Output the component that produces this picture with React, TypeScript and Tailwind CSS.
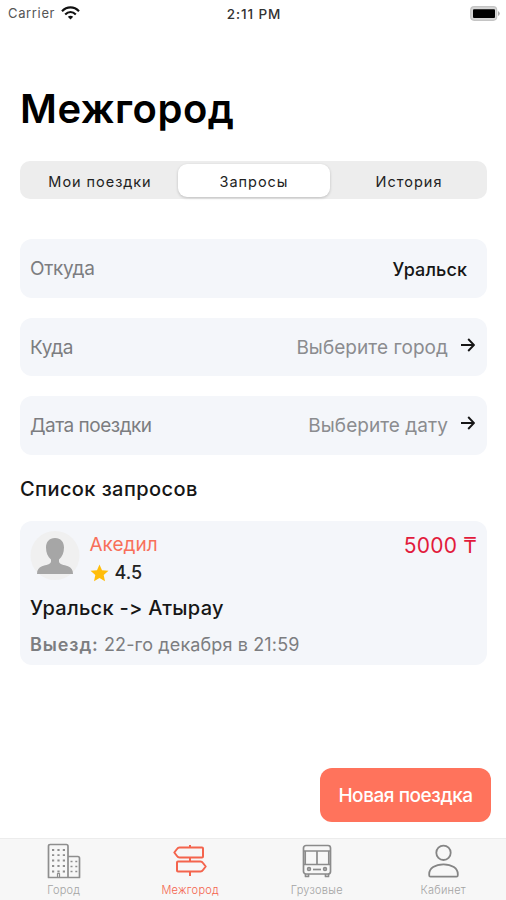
import type { ReactNode } from "react";

const cityIcon = (
  <svg width="34" height="36" viewBox="0 0 34 36" fill="none" stroke="#8e8e8e" strokeWidth="1.7" strokeLinejoin="round">
    <path d="M1.5 34.5V3.2Q1.5 1.5 3.2 1.5H19.3Q21 1.5 21 3.2V34.5Z M21 13.5H30.8Q32.5 13.5 32.5 15.2V34.5H21" />
    <path d="M5 7H18.5M5 12.2H18.5M5 17.5H18.5M5 23H18.5M5 28.5H18.5" strokeWidth="1.8" strokeDasharray="2.2 3.2" />
    <path d="M23.5 18.5H30.5M23.5 23.5H30.5M23.5 28.5H30.5" strokeWidth="1.6" strokeDasharray="2 2.8" />
    <path d="M10.5 34V30.5H12.5V34" strokeWidth="1.2" />
  </svg>
);

const signIcon = (
  <svg width="36" height="34" viewBox="0 0 36 34" fill="none" stroke="#f4644d" strokeWidth="2" strokeLinejoin="round">
    <path d="M18 1V3.5M18 13.5V17.5M18 27.5V32" />
    <path d="M7.5 3.5H30Q31 3.5 31 4.5V12.5Q31 13.5 30 13.5H7.5Q6 13.5 5 12L2.3 8.5L5 5Q6 3.5 7.5 3.5Z" />
    <path d="M28.5 17.5H6Q5 17.5 5 18.5V26.5Q5 27.5 6 27.5H28.5Q30 27.5 31 26L33.7 22.5L31 19Q30 17.5 28.5 17.5Z" />
  </svg>
);

const busIcon = (
  <svg width="30" height="34" viewBox="0 0 30 34" fill="none" stroke="#8b8b8b" strokeWidth="1.7" strokeLinejoin="round">
    <rect x="1.5" y="1.5" width="27" height="28.5" rx="2.5" />
    <path d="M2 7H28M2 20.5H28M15 7V20.5M3.2 7V20.5M26.8 7V20.5" />
    <circle cx="7" cy="25" r="1.4" />
    <circle cx="23" cy="25" r="1.4" />
    <path d="M11 25.5H19" />
    <path d="M3.5 30V32.5H6.5V30M23.5 30V32.5H26.5V30" />
  </svg>
);

const userIcon = (
  <svg width="31" height="34" viewBox="0 0 31 34" fill="none" stroke="#858585" strokeWidth="1.8" strokeLinejoin="round">
    <circle cx="15.5" cy="8.8" r="7.2" />
    <path d="M2.5 32.7Q1.2 32.7 1.2 31.3V30C1.2 24.5 7 20.3 15.5 20.3S29.8 24.5 29.8 30V31.3Q29.8 32.7 28.5 32.7Z" />
  </svg>
);

function Arrow() {
  return (
    <svg className="mb-[6px] ml-[13px]" width="14" height="14" viewBox="0 0 14 14" fill="none" stroke="#161616" strokeWidth="1.9">
      <path d="M0 7H13M7.2 1L13 7L7.2 13" />
    </svg>
  );
}

function Field({ label, spacing, children }: { label: string; spacing: string; children: ReactNode }) {
  return (
    <div className="flex h-[58.5px] items-center justify-between rounded-xl bg-[#f4f6fa] pt-[2px] pr-3 pl-[10px] text-[19px] text-[#7c7d80]">
      <span className={spacing}>{label}</span>
      <div className="flex items-center">{children}</div>
    </div>
  );
}

function Tab({ icon, label, active }: { icon: ReactNode; label: string; active?: boolean }) {
  return (
    <div className={`flex flex-1 flex-col items-center pt-[4px] pl-px text-[11px] leading-4 ${active ? "text-[#f4644d]" : "text-[#a3a3a3]"}`}>
      <div className="flex h-9 items-center">{icon}</div>
      <span className="mt-[3px] font-light tracking-[0.25px]">{label}</span>
    </div>
  );
}

export default function App() {
  return (
    <div className="flex h-[900px] w-[506px] flex-col overflow-hidden bg-white font-['Inter',sans-serif] text-black">
      <header className="grid h-7 grid-cols-3 items-center pr-[6px] pl-2 text-[13px]">
        <div className="flex items-center gap-[6px] text-[#555]">
          <span className="tracking-[0.65px]">Carrier</span>
          <svg className="-mt-[3px]" width="19" height="14" viewBox="0 0 19 14" fill="none" stroke="#111" strokeWidth="2.2">
            <path d="M1 5.2C6 .2 13 .2 18 5.2M4.2 8.5C7.4 5.4 11.6 5.4 14.8 8.5" />
            <path d="M9.5 13.5L6.8 10.8Q9.5 8.7 12.2 10.8Z" fill="#111" stroke="none" />
          </svg>
        </div>
        <span className="text-center text-[13.5px] font-medium tracking-[0.9px] text-[#333]">2:11 PM</span>
        <svg className="-mt-[2px] justify-self-end" width="30" height="15" viewBox="0 0 30 15">
          <rect x="0.7" y="0.7" width="26" height="13.6" rx="3.5" fill="#d6d6d6" stroke="#c4c4c4" strokeWidth="1.2" />
          <rect x="3" y="3.2" width="22" height="8.8" rx="1" fill="#000" />
          <path d="M28 5V10Q29.8 9 29.8 7.5T28 5Z" fill="#aaa" />
        </svg>
      </header>

      <main className="flex flex-1 flex-col pr-[19px] pl-5">
        <h1 className="mt-[57px] text-[40px] leading-[48px] font-semibold tracking-[0.5px]">Межгород</h1>

        <div className="mt-[28px] grid h-[38px] grid-cols-[155px_152px_1fr] items-center rounded-[10px] bg-[#ededed] p-[3px] text-center text-[14.5px] text-[#222]">
          <span className="pt-[2px] pr-px tracking-[0.95px]">Мои поездки</span>
          <span className="flex h-[33px] items-center justify-center rounded-[9px] bg-white pt-[2px] tracking-[0.95px] shadow-[0_1px_3px_rgba(0,0,0,0.2)]">Запросы</span>
          <span className="pt-[2px] pl-[4px] tracking-[1px]">История</span>
        </div>

        <div className="mt-10 flex flex-col gap-5">
          <Field label="Откуда" spacing="tracking-[-0.3px]">
            <span className="pr-2 text-[18px] font-medium tracking-[0.1px] text-[#161616]">Уральск</span>
          </Field>
          <Field label="Куда" spacing="tracking-[-0.3px]">
            <span className="tracking-[0.05px] text-[#8b8c8f]">Выберите город</span>
            <Arrow />
          </Field>
          <Field label="Дата поездки" spacing="tracking-[-0.5px]">
            <span className="tracking-[0.05px] text-[#8b8c8f]">Выберите дату</span>
            <Arrow />
          </Field>
        </div>

        <h2 className="mt-5 text-[20px] leading-7 font-medium tracking-[0.42px] text-[#161616]">Список запросов</h2>

        <article className="mt-[18px] h-[144px] rounded-xl bg-[#f4f6fa] px-[10px] pt-[9px]">
          <div className="flex h-[60px]">
            <svg width="50" height="50" viewBox="0 0 50 50">
              <circle cx="25" cy="25.5" r="24.5" fill="#f0f0f0" />
              <path d="M25 8C19.2 8 16 12 16 17.5C16 22.5 17.8 27 21 29.5V31.5C20.8 34.5 16 34.8 12 36.3C8.5 37.7 7 40 7 44H43C43 40 41.5 37.7 38 36.3C34 34.8 29.2 34.5 29 31.5V29.5C32.2 27 34 22.5 34 17.5C34 12 30.8 8 25 8Z" fill="#a6a6a6" />
            </svg>
            <div className="ml-[9.5px] flex flex-col">
              <span className="pt-px text-[19px] leading-7 text-[#f8705a]">Акедил</span>
              <span className="flex items-center text-[18px] leading-7 font-medium text-[#222]">
                <svg className="mr-[6px]" width="19" height="18" viewBox="0 0 19 18">
                  <path d="M9.5 0.5L12 6.2L18.5 6.8L13.7 11L15 17.2L9.5 14L4 17.2L5.3 11L.5 6.8L7 6.2Z" fill="#ffbd0a" />
                </svg>
                4.5
              </span>
            </div>
            <span className="ml-auto text-[21px] leading-[31px] tracking-[0.2px] text-[#e21b3c]">5000 ₸</span>
          </div>
          <div className="mt-[3px] text-[20px] leading-[30px] font-medium tracking-[0.28px] text-[#161616] [font-feature-settings:'calt'_0]">Уральск -&gt; Атырау</div>
          <div className="mt-[8px] text-[18px] leading-7 tracking-[0.13px] text-[#7c7d80]">
            <b className="font-semibold tracking-[0.9px]">Выезд:</b> 22-го декабря в 21:59
          </div>
        </article>

        <button className="mt-auto -mr-1 mb-4 h-[54px] w-[171px] self-end rounded-xl bg-[#ff735c] pt-[3px] text-[19px] font-medium tracking-[-0.45px] text-white">Новая поездка</button>
      </main>

      <nav className="flex h-[62px] border-t border-[#ececec] bg-[#f7f7f7]">
        <Tab icon={cityIcon} label="Город" />
        <Tab icon={signIcon} label="Межгород" active />
        <Tab icon={busIcon} label="Грузовые" />
        <Tab icon={userIcon} label="Кабинет" />
      </nav>
    </div>
  );
}
